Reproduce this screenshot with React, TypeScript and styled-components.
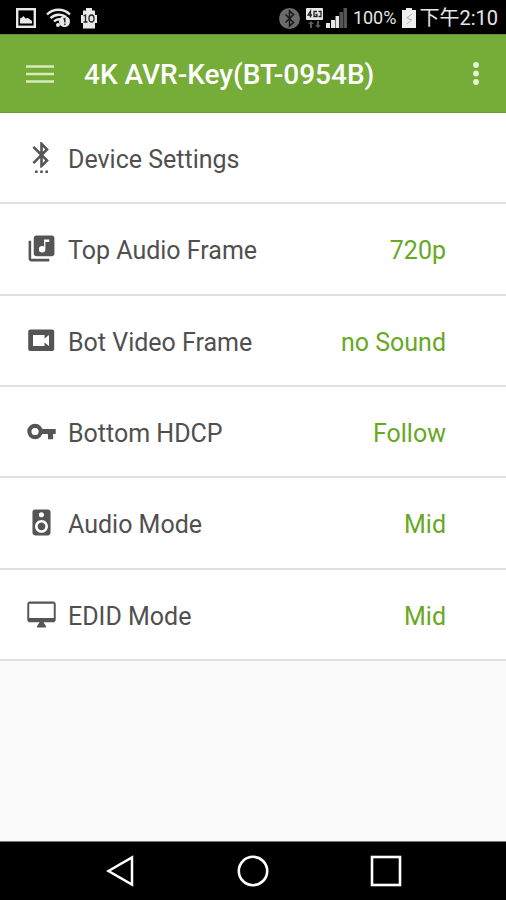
import React from "react";
import styled, { createGlobalStyle } from "styled-components";
import {
  MdLibraryMusic,
  MdSettingsBluetooth,
  MdSpeaker,
} from "react-icons/md";

const GlobalStyle = createGlobalStyle`
  *, *::before, *::after { box-sizing: border-box; }
  body {
    margin: 0;
    background: #fafafa;
    font-family: Roboto, "Noto Sans CJK TC", sans-serif;
  }
`;

const Screen = styled.div`
  display: flex;
  flex-direction: column;
  min-height: 100vh;
  background: #fafafa;
`;

const StatusBar = styled.div`
  display: flex;
  align-items: center;
  justify-content: space-between;
  height: 34px;
  padding: 2px 8px 0 16px;
  background: #000;
  color: #e6e6e6;
`;

const StatusGroup = styled.div<{ $gap: number }>`
  display: flex;
  align-items: center;
  gap: ${(p) => p.$gap}px;
  white-space: nowrap;

  svg {
    display: block;
    flex: none;
  }
`;

const StatusText = styled.span<{ $size: number }>`
  font-size: ${(p) => p.$size}px;
  line-height: 24px;
`;

const AppBar = styled.header`
  display: flex;
  align-items: center;
  height: 79px;
  padding: 0 14px 0 24px;
  background: #76ad38;
  border-top: 1px solid #648a3c;
  border-bottom: 1px solid #6a9f2c;
`;

const BarButton = styled.button`
  display: flex;
  align-items: center;
  justify-content: center;
  width: 32px;
  height: 48px;
  padding: 0;
  border: 0;
  background: none;
  cursor: pointer;
`;

const Title = styled.h1`
  flex: 1;
  margin: 0 0 0 28px;
  padding-top: 2px;
  color: #fff;
  font-size: 28px;
  line-height: 32px;
  font-weight: 500;
  white-space: nowrap;
`;

const SettingsList = styled.ul`
  display: grid;
  grid-auto-rows: 1fr;
  min-height: 548px;
  margin: 0;
  padding: 0;
  list-style: none;
  background: #fff;
`;

const SettingItem = styled.li`
  display: flex;
  border-bottom: 2px solid #e0e0e0;
`;

const SettingButton = styled.button`
  display: flex;
  flex: 1;
  align-items: center;
  gap: 11px;
  padding: 5px 60px 0 26px;
  border: 0;
  background: none;
  font-family: inherit;
  font-size: 25px;
  line-height: 32px;
  text-align: left;
  cursor: pointer;
`;

const SettingIcon = styled.span`
  display: flex;
  padding-bottom: 5px;
  color: #555;
`;

const SettingLabel = styled.span`
  flex: 1;
  color: #505050;
`;

const SettingValue = styled.span`
  color: #68a825;
`;

const NavBar = styled.nav`
  display: grid;
  grid-template-columns: repeat(3, 1fr);
  height: 59px;
  margin-top: auto;
  padding: 0 53px;
  background: #000;
  border-top: 1px solid #777;
`;

const NavButton = styled.button`
  display: flex;
  align-items: center;
  justify-content: center;
  padding: 0;
  border: 0;
  background: none;
  cursor: pointer;
`;

const PictureIcon = () => (
  <svg width="20" height="20" viewBox="0 0 20 20" aria-hidden="true">
    <rect x="1.2" y="1.2" width="17.6" height="17.6" fill="none" stroke="#e8e8e8" strokeWidth="2.4" />
    <path d="M4 15.5V10.5l2-1 1.5-1.500 2 2.500 2.500-.5 4 3v2.500z" fill="#e8e8e8" />
  </svg>
);

const WifiIcon = () => (
  <svg width="25" height="20" viewBox="0 0 25 20" aria-hidden="true">
    <g fill="none" stroke="#e8e8e8" strokeWidth="2.400">
      <path d="M1 6.500C7.500 .2 17.500 .2 24 6.500" />
      <path d="M4.500 10.200C9 5.800 16 5.800 20 9" />
      <path d="M8 13.500C10 11.500 12 11 14 11.400" />
    </g>
    <circle cx="12" cy="17" r="2" fill="#e8e8e8" />
    <circle cx="18.500" cy="13.500" r="5.500" fill="#e8e8e8" />
    <path d="M17.300 11.200l1.500-.7v4M18.800 15.500v1.500" fill="none" stroke="#222" strokeWidth="1.400" />
  </svg>
);

const CleanerIcon = () => (
  <svg width="16" height="21" viewBox="0 0 16 21" aria-hidden="true">
    <path d="M5 0h6v2.500h3V7h2v8h-2v5.500H2V15H0V7h2V2.500h3z" fill="#e8e8e8" />
    <path d="M2.500 8l2-1v7M2.500 14h4" fill="none" stroke="#222" strokeWidth="1.300" />
    <ellipse cx="10.500" cy="10.500" rx="2.500" ry="3.500" fill="none" stroke="#222" strokeWidth="1.300" />
  </svg>
);

const BluetoothStatusIcon = () => (
  <svg width="21" height="21" viewBox="0 0 21 21" aria-hidden="true">
    <circle cx="10.500" cy="10.500" r="10.500" fill="#6b6b6b" />
    <path d="M6.500 6.500l8 8-4 3.500V3l4 3.500-8 8" fill="none" stroke="#161616" strokeWidth="1.500" />
  </svg>
);

const DataIcon = () => (
  <svg width="17" height="21" viewBox="0 0 17 21" aria-hidden="true">
    <rect width="17" height="12" rx="1" fill="#e8e8e8" />
    <g fill="none" stroke="#222" strokeWidth="1.300">
      <path d="M4.500 9.500V3L2 7h4M11 3.500H8v5h3V6.500H9.500M12.500 3.500h2.500v5h-2.500" />
    </g>
    <path d="M5 13l3 3H6v4H4v-4H2zM12 20l-3-3h2v-4h2v4h2z" fill="#5c5c5c" />
  </svg>
);

const SignalIcon = () => (
  <svg width="21" height="20" viewBox="0 0 21 20" aria-hidden="true">
    <path d="M0 15h4v5H0zM5 12h4v8H5zM9.500 8h3.500v12H9.500z" fill="#e8e8e8" />
    <path d="M13.500 4H17v16h-3.500zM17.500 0H21v20h-3.500z" fill="#555" />
  </svg>
);

const BatteryIcon = () => (
  <svg width="14" height="20" viewBox="0 0 14 20" aria-hidden="true">
    <path d="M4 0h6v2h4v18H0V2h4z" fill="#eee" />
    <path d="M10 6L4.500 10h2.500v1.500h3L5 16" fill="none" stroke="#b5b5b5" strokeWidth="1" />
  </svg>
);

const VideoFrameIcon = () => (
  <svg width="31" height="31" viewBox="0 0 31 31" aria-hidden="true">
    <rect x="2.200" y="4.500" width="26" height="21.500" rx="2" fill="currentColor" />
    <path d="M7 10h11.500v3.500l4.500-3.500v11l-4.500-3.500V21H7z" fill="#fff" />
  </svg>
);

const KeyIcon = () => (
  <svg width="31" height="31" viewBox="0 0 24 24" aria-hidden="true">
    <circle cx="7" cy="12" r="4.400" fill="none" stroke="currentColor" strokeWidth="3.200" />
    <path d="M12 10h11v4h-2v4h-4v-4h-5z" fill="currentColor" />
  </svg>
);

const MonitorIcon = () => (
  <svg width="31" height="31" viewBox="0 0 24 24" fill="currentColor" aria-hidden="true">
    <path d="M21 2H3c-1.100 0-2 .9-2 2v12c0 1.100.9 2 2 2h7.500l-2 3v1h7v-1l-2-3H21c1.100 0 2-.9 2-2V4c0-1.100-.9-2-2-2zm.5 12.800h-19V3.600h19z" />
  </svg>
);

type Setting = { label: string; value?: string; icon: React.ReactNode };

const settings: Setting[] = [
  { label: "Device Settings", icon: <MdSettingsBluetooth size={31} /> },
  { label: "Top Audio Frame", value: "720p", icon: <MdLibraryMusic size={31} /> },
  { label: "Bot Video Frame", value: "no Sound", icon: <VideoFrameIcon /> },
  { label: "Bottom HDCP", value: "Follow", icon: <KeyIcon /> },
  { label: "Audio Mode", value: "Mid", icon: <MdSpeaker size={31} /> },
  { label: "EDID Mode", value: "Mid", icon: <MonitorIcon /> },
];

export default function App() {
  return (
    <>
      <GlobalStyle />
      <Screen>
        <StatusBar>
          <StatusGroup $gap={10}>
            <PictureIcon />
            <WifiIcon />
            <CleanerIcon />
          </StatusGroup>
          <StatusGroup $gap={6}>
            <BluetoothStatusIcon />
            <StatusGroup $gap={3}>
              <DataIcon />
              <SignalIcon />
            </StatusGroup>
            <StatusText $size={18}>100%</StatusText>
            <StatusGroup $gap={3}>
              <BatteryIcon />
              <StatusText $size={20}>下午2:10</StatusText>
            </StatusGroup>
          </StatusGroup>
        </StatusBar>

        <AppBar>
          <BarButton type="button" aria-label="Open menu">
            <svg width="28" height="18" viewBox="0 0 28 18" aria-hidden="true">
              <path d="M0 1.500h28M0 9h28M0 16.500h28" stroke="#d6ebbd" strokeWidth="2.600" />
            </svg>
          </BarButton>
          <Title>4K AVR-Key(BT-0954B)</Title>
          <BarButton type="button" aria-label="More options">
            <svg width="6" height="24" viewBox="0 0 6 24" aria-hidden="true">
              <g fill="#e2f3cf">
                <circle cx="3" cy="3" r="2.900" />
                <circle cx="3" cy="11.500" r="2.900" />
                <circle cx="3" cy="20" r="2.900" />
              </g>
            </svg>
          </BarButton>
        </AppBar>

        <main>
          <SettingsList>
            {settings.map((item) => (
              <SettingItem key={item.label}>
                <SettingButton type="button">
                  <SettingIcon>{item.icon}</SettingIcon>
                  <SettingLabel>{item.label}</SettingLabel>
                  {item.value && <SettingValue>{item.value}</SettingValue>}
                </SettingButton>
              </SettingItem>
            ))}
          </SettingsList>
        </main>

        <NavBar aria-label="System">
          <NavButton type="button" aria-label="Back">
            <svg width="28" height="32" viewBox="0 0 28 32" aria-hidden="true">
              <path d="M26 2.500v27L2.500 16z" fill="none" stroke="#fff" strokeWidth="2.500" />
            </svg>
          </NavButton>
          <NavButton type="button" aria-label="Home">
            <svg width="32" height="32" viewBox="0 0 32 32" aria-hidden="true">
              <circle cx="16" cy="16" r="14.200" fill="none" stroke="#fff" strokeWidth="2.600" />
            </svg>
          </NavButton>
          <NavButton type="button" aria-label="Recent apps">
            <svg width="32" height="32" viewBox="0 0 32 32" aria-hidden="true">
              <rect x="2" y="2" width="28" height="28" fill="none" stroke="#fff" strokeWidth="2.600" />
            </svg>
          </NavButton>
        </NavBar>
      </Screen>
    </>
  );
}
